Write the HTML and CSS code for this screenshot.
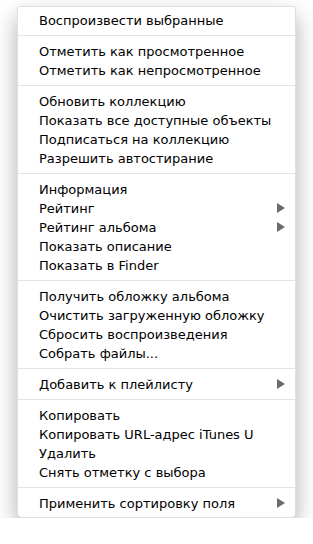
FILE: index.html
```html
<!DOCTYPE html>
<html lang="ru">
<head>
    <meta charset="UTF-8">
    <meta name="viewport" content="width=device-width, initial-scale=1.0">
    <title>Контекстное меню</title>
    <link rel="stylesheet" href="styles.css">
</head>
<body>
    <div class="menu">
        <div class="item">Воспроизвести выбранные</div>
        <div class="sep"></div>
        <div class="item">Отметить как просмотренное</div>
        <div class="item">Отметить как непросмотренное</div>
        <div class="sep"></div>
        <div class="item">Обновить коллекцию</div>
        <div class="item">Показать все доступные объекты</div>
        <div class="item">Подписаться на коллекцию</div>
        <div class="item">Разрешить автостирание</div>
        <div class="sep"></div>
        <div class="item">Информация</div>
        <div class="item sub">Рейтинг</div>
        <div class="item sub">Рейтинг альбома</div>
        <div class="item">Показать описание</div>
        <div class="item">Показать в Finder</div>
        <div class="sep"></div>
        <div class="item">Получить обложку альбома</div>
        <div class="item">Очистить загруженную обложку</div>
        <div class="item">Сбросить воспроизведения</div>
        <div class="item">Собрать файлы...</div>
        <div class="sep"></div>
        <div class="item sub">Добавить к плейлисту</div>
        <div class="sep"></div>
        <div class="item">Копировать</div>
        <div class="item">Копировать URL-адрес iTunes U</div>
        <div class="item">Удалить</div>
        <div class="item">Снять отметку с выбора</div>
        <div class="sep"></div>
        <div class="item sub">Применить сортировку поля</div>
    </div>
</body>
</html>
```

FILE: styles.css
```css
body, html {
    margin: 0;
    padding: 0;
    background: #fff;
}
body {
    padding: 6px 0 0 17px;
    font-family: 'DejaVu Sans', sans-serif;
    font-size: 13px;
    color: #000;
}
.menu {
    width: 279px;
    padding: 4px 0;
    background: #fff;
    border: 1px solid rgba(0, 0, 0, 0.12);
    border-radius: 3px 3px 5px 5px;
    box-sizing: border-box;
    box-shadow: 0 10px 22px rgba(0, 0, 0, 0.32);
}
.item {
    height: 19px;
    line-height: 19px;
    padding-left: 21px;
    position: relative;
}
.sub::after {
    content: '';
    position: absolute;
    right: 10px;
    top: 4px;
    border-left: 8px solid #6b6b6b;
    border-top: 5px solid transparent;
    border-bottom: 5px solid transparent;
}
.sep {
    height: 1px;
    margin: 5px 0 6px;
    background: #e4e4e4;
}
```
